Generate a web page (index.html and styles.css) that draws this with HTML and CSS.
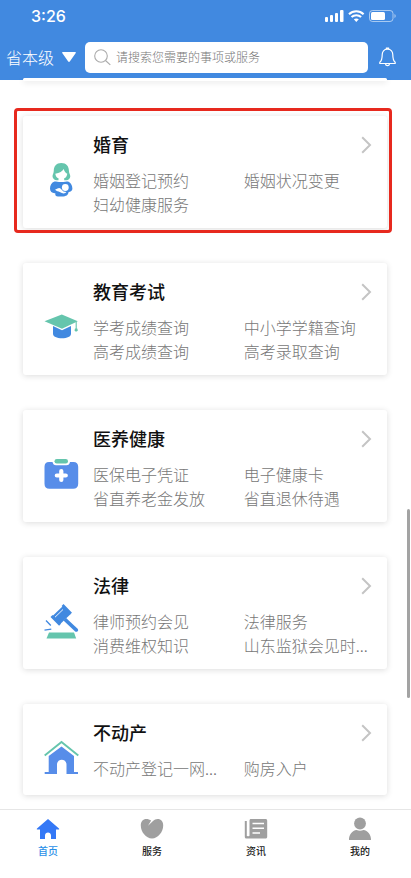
FILE: index.html
```html
<!DOCTYPE html>
<html lang="zh-CN">
<head>
<meta charset="utf-8">
<meta name="viewport" content="width=device-width, initial-scale=1">
<title>政务服务</title>
<link rel="stylesheet" href="styles.css">
</head>
<body>
<header class="top">
  <div class="status">
    <span class="time">3:26</span>
    <svg class="status-icons" width="72" height="14" viewBox="0 0 72 14" aria-hidden="true">
      <g fill="#fff">
        <rect x="0" y="8" width="3" height="5" rx="1"/>
        <rect x="5" y="6" width="3" height="7" rx="1"/>
        <rect x="10" y="4" width="3" height="9" rx="1"/>
        <rect x="15" y="1" width="3.5" height="12" rx="1"/>
        <rect x="46" y="3" width="14" height="8" rx="1.5"/>
        <path d="M69.5 5v4c1.6-.6 1.6-3.400 0-4z" opacity=".6"/>
        <path d="M31.300 13l-2.500-2.700c1.400-1.200 3.600-1.200 5 0z"/>
      </g>
      <path d="M24 5.200c4.100-4 10.500-4 14.600 0M26.500 8.100c2.700-2.500 6.900-2.500 9.600 0" fill="none" stroke="#fff" stroke-width="2.100"/>
      <rect x="44.500" y="1.500" width="23.500" height="11" rx="3" fill="none" stroke="#fff" stroke-opacity=".55"/>
    </svg>
  </div>
  <div class="tools">
    <button class="region" type="button">省本级
      <svg width="14" height="10" viewBox="0 0 14 10" aria-hidden="true"><path d="M.8 0h12.400q1.200.3.400 1.300L7.800 9.500q-.8.8-1.600 0L.4 1.300Q-.4.300.8 0z" fill="#fff"/></svg>
    </button>
    <label class="search">
      <svg width="17" height="17" viewBox="0 0 17 17" fill="none" stroke="#aaa" stroke-width="1.100" aria-hidden="true"><circle cx="7" cy="7" r="6.300"/><path d="M11.500 11.500l4.800 4.300"/></svg>
      <input type="search" placeholder="请搜索您需要的事项或服务" aria-label="搜索">
    </label>
    <button class="bell" type="button" aria-label="消息">
      <svg width="17" height="20" viewBox="0 0 17 20" fill="none" stroke="#fff" stroke-width="1.200" stroke-linejoin="round" aria-hidden="true"><path d="M8.500 2.200c-3.600 0-5.300 2.500-5.300 5.500 0 4.200-.7 6.200-2.400 7.600v1.200h15.400v-1.200c-1.700-1.400-2.400-3.400-2.400-7.600 0-3-1.700-5.500-5.300-5.500zM7.300 2.200V1h2.400v1.200M6.500 16.800c.3 2.300 3.700 2.300 4 0"/></svg>
    </button>
  </div>
</header>

<main class="list">
  <div class="card-tail"></div>

  <section class="card">
    <svg class="pic" width="36" height="36" viewBox="0 0 36 36" aria-hidden="true">
      <path d="M18.300 1c-5 0-7.500 3.500-7.500 7.500 0 2.500-1.300 4-1.300 5.800 0 2.400 2 3.900 4 3.900h9.800c2.300 0 4-1.500 4-3.900 0-1.800-1.400-3.300-1.400-5.800 0-4-2.600-7.500-7.600-7.500z" fill="#65c5ad"/>
      <path d="M12.300 11.700c4.300-.7 7.300-2.500 8.400-4.700.5 2.300 1.700 3.800 3.600 4.700-.3 2.300-1.400 3.900-3.100 4.600v2.700h-5.700v-2.700c-1.800-.7-2.900-2.300-3.200-4.600z" fill="#fff"/>
      <path d="M11.500 19.500c2 0 3.400.6 6.800.6 3.300 0 4.800-.6 6.700-.6 3 1 4.400 4.500 4.400 7.200 0 2.100-1.700 3-3.800 3.200-.4 3-2.300 4.500-6.600 4.500h-4c-2 0-3-1-2.700-3.200-3 .3-5.300-1.500-5.300-4.600 0-3 1.500-6.200 4.500-7.100z" fill="#4189e0"/>
      <circle cx="22.300" cy="25.500" r="3.400" fill="#fff"/>
      <path d="M12.300 27.200c2 .2 3.500-2.300 5.200-.6l3 2.900 2.900.5c-.6 1.400-2.900 1.800-4.500 1.100l-3.300-1.700c-1.500-.3-3.100-.8-3.300-2.200z" fill="#fff"/>
    </svg>
    <div class="body">
      <h2><a href="#">婚育<svg class="arrow" width="11" height="18" viewBox="0 0 11 18" aria-hidden="true"><path d="M1.200 1.200L9 9l-7.800 7.800"/></svg></a></h2>
      <div class="links"><a href="#">婚姻登记预约</a><a href="#">婚姻状况变更</a><a href="#">妇幼健康服务</a></div>
    </div>
    <span class="mark"></span>
  </section>

  <section class="card">
    <svg class="pic" width="36" height="36" viewBox="0 0 36 36" aria-hidden="true">
      <path d="M10 17l9 4.200 9-4.200v7.800c0 2.900-3.800 4.500-9 4.500s-9-1.600-9-4.500z" fill="#4189e0"/>
      <path d="M1.500 12.300L18.800 5.500l16 6.800-15.800 7.400z" fill="#65c5ad"/>
      <path d="M33.200 12.500v8" stroke="#65c5ad" stroke-width="1.100"/>
      <path d="M32 19.400h2.300l.6 2-1.200 1.100h-1.200l-1-1.100z" fill="#65c5ad"/>
    </svg>
    <div class="body">
      <h2><a href="#">教育考试<svg class="arrow" width="11" height="18" viewBox="0 0 11 18" aria-hidden="true"><path d="M1.200 1.200L9 9l-7.800 7.800"/></svg></a></h2>
      <div class="links"><a href="#">学考成绩查询</a><a href="#">中小学学籍查询</a><a href="#">高考成绩查询</a><a href="#">高考录取查询</a></div>
    </div>
  </section>

  <section class="card">
    <svg class="pic" width="36" height="36" viewBox="0 0 36 36" aria-hidden="true">
      <path d="M6 6h3.500c.4 2 1.600 3.300 3.500 3.300h10.500c2 0 3.200-1.300 3.500-3.300h3.500c3 0 4.700 1.700 4.700 4.700v17c0 3.200-1.900 5-5 5H6.500c-3.300 0-5-1.800-5-5v-17C1.500 7.700 3 6 6 6z" fill="#578de9"/>
      <rect x="11.500" y="3" width="13.500" height="4.500" rx="2.250" fill="#65c5ad"/>
      <path d="M18.300 15v9M13.800 19.500h9" stroke="#fff" stroke-width="4.200" stroke-linecap="round"/>
    </svg>
    <div class="body">
      <h2><a href="#">医养健康<svg class="arrow" width="11" height="18" viewBox="0 0 11 18" aria-hidden="true"><path d="M1.200 1.200L9 9l-7.800 7.800"/></svg></a></h2>
      <div class="links"><a href="#">医保电子凭证</a><a href="#">电子健康卡</a><a href="#">省直养老金发放</a><a href="#">省直退休待遇</a></div>
    </div>
  </section>

  <section class="card">
    <svg class="pic" width="36" height="36" viewBox="0 0 36 36" aria-hidden="true">
      <path d="M6 29.500h25l2.200 6H3.500z" fill="#65c5ad"/>
      <g fill="#4189e0">
        <path d="M9 13.500L20 3.100l7.700 8L16.500 21.700z"/>
        <path d="M18.600 2.900l1.900-1.800 8.500 8.600-2 1.900zM7.500 13.900l2-1.900 8.500 8.800-1.900 1.900z"/>
        <path d="M20.500 17.500l2.600-2.500 11.500 10.700c1.700 1.800-.8 4.300-2.700 2.600z"/>
      </g>
      <path d="M12 14.200l8-7.700" stroke="#fff" stroke-width=".9"/>
      <path d="M3 17.500l4.800 5M1.500 27.200l6.800-1" stroke="#4189e0" stroke-width="1.300"/>
    </svg>
    <div class="body">
      <h2><a href="#">法律<svg class="arrow" width="11" height="18" viewBox="0 0 11 18" aria-hidden="true"><path d="M1.200 1.200L9 9l-7.800 7.800"/></svg></a></h2>
      <div class="links"><a href="#">律师预约会见</a><a href="#">法律服务</a><a href="#">消费维权知识</a><a href="#">山东监狱会见时...</a></div>
    </div>
  </section>

  <section class="card">
    <svg class="pic" width="36" height="36" viewBox="0 0 36 36" aria-hidden="true">
      <path d="M18.500 6.500L31 16v16h4v2H23.500V24.500c0-6.500-9.500-6.500-9.500 0V34H1.700v-2h4V16z" fill="#578de9"/>
      <path d="M1.700 15.500L18.500 2l16.800 13.500" fill="none" stroke="#65c5ad" stroke-width="1.900"/>
    </svg>
    <div class="body">
      <h2><a href="#">不动产<svg class="arrow" width="11" height="18" viewBox="0 0 11 18" aria-hidden="true"><path d="M1.200 1.200L9 9l-7.800 7.800"/></svg></a></h2>
      <div class="links"><a href="#">不动产登记一网...</a><a href="#">购房入户</a></div>
    </div>
  </section>
</main>
<div class="scroll-thumb"></div>

<nav class="tabs">
  <a class="tab active" href="#">
    <svg width="24" height="24" viewBox="0 0 24 24" aria-hidden="true"><path d="M12 2L1 11.600c-.5.700-.2 1 .4 1H4V22h5v-3.500c0-4 6-4 6 0V22h5v-9.400h2.600c.6 0 .9-.3.4-1z" fill="#3478f6"/></svg>
    首页</a>
  <a class="tab" href="#">
    <svg width="24" height="24" viewBox="0 0 24 24" aria-hidden="true"><path d="M12 21.500C6 21.300.8 15 .8 8.500.8 4.500 3 2 6.300 2c1.800 0 3.500.5 4.900 1.600L8 8.700l5-4.600C14.200 2.800 16 2 17.700 2c3.300 0 5.500 2.500 5.500 6.500 0 6.500-5.200 12.800-11.200 13z" fill="#9f9f9f"/></svg>
    服务</a>
  <a class="tab" href="#">
    <svg width="24" height="24" viewBox="0 0 24 24" aria-hidden="true"><path d="M7 2h14.500c1 0 1.700.7 1.700 1.700v16c0 1-.7 1.800-1.700 1.800H2.500C1.300 21.500.8 20.700.8 19.700V4h2v14.700c0 .6 2.700.6 2.700 0v-15C5.500 2.700 6 2 7 2z" fill="#9f9f9f"/><path d="M8.500 6.500H20M8.500 11.200H20M8.500 16H16" stroke="#fff" stroke-width="1.500"/></svg>
    资讯</a>
  <a class="tab" href="#">
    <svg width="24" height="24" viewBox="0 0 24 24" aria-hidden="true"><circle cx="12" cy="6.500" r="5.900" fill="#9f9f9f"/><path d="M1 23c-.4-4.500 3.500-10 7.500-10 2.200 1 4.800 1 7 0 4 0 7.900 5.500 7.500 10z" fill="#9f9f9f"/></svg>
    我的</a>
</nav>
</body>
</html>
```
FILE: styles.css
```css
* { box-sizing: border-box; }

body {
  margin: 0;
  height: 100vh;
  display: flex;
  flex-direction: column;
  position: relative;
  overflow: hidden;
  background: #fff;
  font-family: "Noto Sans CJK SC", sans-serif;
}

a { color: inherit; text-decoration: none; }
button { border: 0; padding: 0; background: none; font: inherit; color: inherit; }
svg { display: block; flex: none; }

.top {
  flex: none;
  height: 80px;
  background: #4189e0;
  color: #fff;
}

.status {
  height: 32px;
  padding: 0 14px 0 31px;
  display: flex;
  align-items: center;
  justify-content: space-between;
}

.time {
  font: 500 16px/32px Inter, sans-serif;
}

.tools {
  height: 48px;
  padding: 10px 15px 8px 6px;
  display: flex;
  align-items: center;
}

.region {
  display: flex;
  align-items: center;
  gap: 8px;
  margin-right: 9px;
  font-size: 16px;
  font-weight: 300;
  line-height: 24px;
}

.search {
  flex: 1;
  height: 31px;
  margin-right: 11px;
  padding-left: 9px;
  display: flex;
  align-items: center;
  gap: 5px;
  background: #fff;
  border-radius: 5px;
}

.search input {
  flex: 1;
  min-width: 0;
  border: 0;
  padding: 0;
  outline: 0;
  background: none;
  font: 300 12px/20px "Noto Sans CJK SC", sans-serif;
  color: #333;
}

.search input::placeholder { color: #777; }

.list {
  flex: 1;
  min-height: 0;
  margin-top: -2px;
  padding: 0 24px 0 23px;
  display: flex;
  flex-direction: column;
  gap: 35px;
}

.card,
.card-tail {
  flex: none;
  background: #fff;
  border-radius: 3px;
  box-shadow: 0 1px 6px rgba(0, 0, 0, 0.14);
}

.card-tail {
  height: 3px;
  clip-path: inset(0 -8px -10px);
}

.card {
  position: relative;
  display: flex;
  align-items: flex-start;
  gap: 14px;
  min-height: 91px;
  padding: 15px 15px 12px 20px;
}

.pic {
  align-self: center;
  margin-top: 13px;
}

.body { flex: 1; min-width: 0; }

h2 {
  margin: 0 0 10px;
  font-size: 18px;
  font-weight: 500;
  line-height: 27px;
  color: #111;
}

h2 a {
  display: flex;
  align-items: center;
  justify-content: space-between;
}

.arrow {
  fill: none;
  stroke: #c4c4c4;
  stroke-width: 2;
}

.links {
  display: grid;
  grid-template-columns: 27fr 23fr;
  font-size: 16px;
  font-weight: 300;
  line-height: 24px;
  color: #777;
  white-space: nowrap;
}

.mark {
  position: absolute;
  inset: -8px -5px -5px -9px;
  border: 3px solid #e7291e;
  border-radius: 4px;
  pointer-events: none;
}

.scroll-thumb {
  position: absolute;
  right: 1px;
  top: 58%;
  width: 3px;
  height: 189px;
  border-radius: 2px;
  background: #a3a3a3;
}

.tabs {
  flex: none;
  height: 69px;
  display: flex;
  justify-content: space-between;
  padding: 7px 31px 0 28px;
  border-top: 1px solid #e6e6e6;
  background: #fff;
}

.tab {
  width: 40px;
  display: flex;
  flex-direction: column;
  align-items: center;
  gap: 2px;
  font-size: 10px;
  font-weight: 500;
  line-height: 16px;
  color: #222;
}

.tab.active { color: #2b90e8; }
```
